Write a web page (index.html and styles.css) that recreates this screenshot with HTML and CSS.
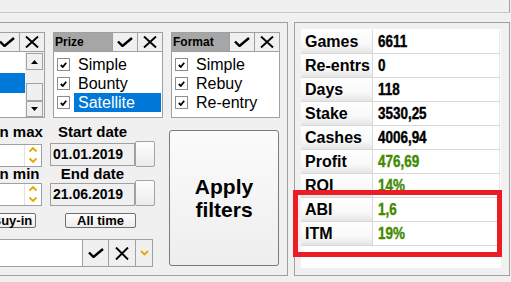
FILE: index.html
```html
<!DOCTYPE html>
<html lang="en">
<head>
<meta charset="utf-8">
<title>Tournament filters</title>
<link rel="stylesheet" href="styles.css">
</head>
<body>
<div class="top-panel"></div>
<div class="main">
  <section class="filters">
    <div class="groups">
      <div class="group g-type">
        <div class="g-head">
          <span class="g-title">Game</span>
          <span class="hbtn"><svg class="ic-check" viewBox="0 0 16 10"><polyline points="1,4.5 5.5,9 15,1"/></svg></span>
          <span class="hbtn"><svg class="ic-x" viewBox="0 0 14 12"><path d="M1 0.5 L13 11.5 M13 0.5 L1 11.5"/></svg></span>
        </div>
        <div class="list">
          <div class="list-items">
            <div class="li">NLH</div>
            <div class="li sel">PLO</div>
            <div class="li">Mix</div>
          </div>
          <div class="scrollbar">
            <div class="sb-btn sb-up"><svg viewBox="0 0 7 4"><polygon points="0,4 3.5,0 7,4"/></svg></div>
            <div class="sb-track"></div>
            <div class="sb-thumb"></div>
            <div class="sb-btn sb-down"><svg viewBox="0 0 7 4"><polygon points="0,0 7,0 3.5,4"/></svg></div>
          </div>
        </div>
      </div>

      <div class="group g-prize">
        <div class="g-head">
          <span class="g-title">Prize</span>
          <span class="hbtn"><svg class="ic-check" viewBox="0 0 16 10"><polyline points="1,4.5 5.5,9 15,1"/></svg></span>
          <span class="hbtn"><svg class="ic-x" viewBox="0 0 14 12"><path d="M1 0.5 L13 11.5 M13 0.5 L1 11.5"/></svg></span>
        </div>
        <div class="items">
          <div class="item"><span class="cb"><svg viewBox="0 0 7 6"><polyline points="0.8,3 2.8,5 6.2,0.8"/></svg></span><span class="lbl">Simple</span></div>
          <div class="item"><span class="cb"><svg viewBox="0 0 7 6"><polyline points="0.8,3 2.8,5 6.2,0.8"/></svg></span><span class="lbl">Bounty</span></div>
          <div class="item"><span class="cb"><svg viewBox="0 0 7 6"><polyline points="0.8,3 2.8,5 6.2,0.8"/></svg></span><span class="lbl sel">Satellite</span></div>
        </div>
      </div>

      <div class="group g-format">
        <div class="g-head">
          <span class="g-title">Format</span>
          <span class="hbtn"><svg class="ic-check" viewBox="0 0 16 10"><polyline points="1,4.5 5.5,9 15,1"/></svg></span>
          <span class="hbtn"><svg class="ic-x" viewBox="0 0 14 12"><path d="M1 0.5 L13 11.5 M13 0.5 L1 11.5"/></svg></span>
        </div>
        <div class="items">
          <div class="item"><span class="cb"><svg viewBox="0 0 7 6"><polyline points="0.8,3 2.8,5 6.2,0.8"/></svg></span><span class="lbl">Simple</span></div>
          <div class="item"><span class="cb"><svg viewBox="0 0 7 6"><polyline points="0.8,3 2.8,5 6.2,0.8"/></svg></span><span class="lbl">Rebuy</span></div>
          <div class="item"><span class="cb"><svg viewBox="0 0 7 6"><polyline points="0.8,3 2.8,5 6.2,0.8"/></svg></span><span class="lbl">Re-entry</span></div>
        </div>
      </div>
    </div>

    <div class="row2">
      <div class="ranges">
        <div class="lab lab-a">Buy-in max</div>
        <div class="lab lab-b">Start date</div>

        <div class="cell-a">
          <div class="spin">
            <span class="spin-val"></span>
            <span class="spin-arrows"><svg viewBox="0 0 16 21"><polyline points="4.5,6.5 8,3 11.5,6.5"/><polyline points="4.5,13.5 8,17 11.5,13.5"/></svg></span>
          </div>
        </div>
        <div class="cell-b">
          <div class="date">01.01.2019</div>
          <button class="date-btn" type="button"></button>
        </div>

        <div class="lab lab-a lab-tight">Buy-in min</div>
        <div class="lab lab-b lab-tight">End date</div>

        <div class="cell-a">
          <div class="spin">
            <span class="spin-val"></span>
            <span class="spin-arrows"><svg viewBox="0 0 16 21"><polyline points="4.5,6.5 8,3 11.5,6.5"/><polyline points="4.5,13.5 8,17 11.5,13.5"/></svg></span>
          </div>
        </div>
        <div class="cell-b cell-b2">
          <div class="date">21.06.2019</div>
          <button class="date-btn" type="button"></button>
        </div>

        <div class="btn-cell btn-cell-a"><button class="small-btn buyin" type="button">Buy-in</button></div>
        <div class="btn-cell btn-cell-b"><button class="small-btn alltime" type="button">All time</button></div>

        <div class="combo">
          <span class="combo-text"></span>
          <span class="combo-btn cbtn-check"><svg class="ic-check" viewBox="0 0 16 10"><polyline points="1,4.5 5.5,9 15,1"/></svg></span>
          <span class="combo-btn cbtn-x"><svg class="ic-x2" viewBox="0 0 14 13"><path d="M1 0.5 L13 12.5 M13 0.5 L1 12.5"/></svg></span>
          <span class="combo-btn cbtn-drop"><svg viewBox="0 0 9 6"><polyline points="1,1 4.5,4.5 8,1"/></svg></span>
        </div>
      </div>
      <button class="apply" type="button">Apply<br>filters</button>
    </div>
  </section>

  <section class="stats">
    <div class="stats-inner">
      <div class="srow"><span class="sk">Games</span><span class="sv"><span class="num">6611</span></span></div>
      <div class="srow"><span class="sk">Re-entrs</span><span class="sv"><span class="num">0</span></span></div>
      <div class="srow"><span class="sk">Days</span><span class="sv"><span class="num">118</span></span></div>
      <div class="srow"><span class="sk">Stake</span><span class="sv"><span class="num">3530,25</span></span></div>
      <div class="srow"><span class="sk">Cashes</span><span class="sv"><span class="num">4006,94</span></span></div>
      <div class="srow"><span class="sk">Profit</span><span class="sv pos"><span class="num">476,69</span></span></div>
      <div class="srow"><span class="sk">ROI</span><span class="sv pos"><span class="num">14%</span></span></div>
      <div class="srow"><span class="sk">ABI</span><span class="sv pos"><span class="num">1,6</span></span></div>
      <div class="srow"><span class="sk">ITM</span><span class="sv pos"><span class="num">19%</span></span></div>
    </div>
  </section>
</div>
<div class="highlight"></div>
</body>
</html>
```

FILE: styles.css
```css
* { box-sizing: border-box; }
html, body { margin: 0; padding: 0; }
body {
  width: 511px;
  height: 282px;
  overflow: hidden;
  background: #f0f0f0;
  font-family: "Liberation Sans", Arial, sans-serif;
  color: #000;
  position: relative;
}
svg { display: block; }

.top-panel {
  width: 510px;
  height: 13px;
  border-right: 1px solid #a0a0a0;
  border-bottom: 1px solid #c6c6c6;
}

.main {
  display: flex;
  gap: 6px;
  margin-top: 9px;
  margin-left: -150px;
}

/* ---------- filters panel ---------- */
.filters {
  width: 438px;
  height: 254px;
  border: 1px solid #a0a0a0;
  padding: 9px 7px 0 8px;
  flex-shrink: 0;
}

.groups {
  display: flex;
  gap: 8px;
  height: 86px;
}

.group {
  border: 1px solid #a0a0a0;
  background: #fff;
  display: flex;
  flex-direction: column;
}
.g-type { width: 186px; }
.g-prize { width: 110px; }
.g-format { width: 109px; }

.g-head {
  display: flex;
  height: 19px;
  background: #a6a6a6;
  border-bottom: 1px solid #a0a0a0;
  flex-shrink: 0;
}
.g-title {
  flex: 1;
  font-size: 12px;
  font-weight: bold;
  line-height: 18px;
  padding-left: 1px;
}
.hbtn {
  width: 25px;
  border-left: 1px solid #a0a0a0;
  background: #f0f0f0;
  display: flex;
  align-items: center;
  justify-content: center;
}
.ic-check { width: 16px; height: 10px; }
.ic-check polyline { fill: none; stroke: #000; stroke-width: 2.4; }
.ic-x { width: 14px; height: 12px; }
.ic-x path, .ic-x2 path { fill: none; stroke: #000; stroke-width: 1.9; }
.ic-x2 { width: 14px; height: 13px; }

/* list with scrollbar */
.list {
  flex: 1;
  display: flex;
}
.list-items {
  flex: 1;
  padding-top: 1px;
}
.li {
  height: 20px;
  line-height: 20px;
  font-size: 16px;
  padding-left: 4px;
}
.li.sel { background: #0078d7; color: #fff; }
.scrollbar {
  width: 19px;
  background: #f0f0f0;
  padding: 1px 1px 0 1px;
  display: flex;
  flex-direction: column;
}
.sb-btn, .sb-thumb {
  border: 1px solid #a3a3a3;
  background: #f0f0f0;
  display: flex;
  align-items: center;
  justify-content: center;
}
.sb-up { height: 17px; }
.sb-track { height: 13px; }
.sb-thumb { height: 18px; }
.sb-down { height: 16px; }
.sb-btn svg { width: 7px; height: 4px; }
.sb-btn polygon { fill: #000; }

/* checkbox items */
.items { padding-top: 3px; }
.item {
  height: 19px;
  display: flex;
  align-items: center;
  padding-left: 3px;
}
.cb {
  width: 13px;
  height: 13px;
  border: 1px solid #8c8c8c;
  background: #fff;
  margin-right: 4px;
  display: flex;
  align-items: center;
  justify-content: center;
  flex-shrink: 0;
}
.cb svg { width: 7px; height: 6px; }
.cb polyline { fill: none; stroke: #000; stroke-width: 1.8; }
.lbl {
  flex: 1;
  height: 19px;
  line-height: 19px;
  font-size: 16px;
  padding-left: 4px;
  margin-right: 1px;
}
.lbl.sel { background: #0078d7; color: #fff; }

/* ---------- lower filters ---------- */
.row2 {
  display: flex;
  gap: 14px;
  margin-top: 5px;
}
.ranges {
  width: 296px;
  display: grid;
  grid-template-columns: 183px 105px;
  grid-template-rows: 18px 26px 13px 26px 22px 39px;
  column-gap: 8px;
}
.lab {
  font-size: 15px;
  font-weight: bold;
  line-height: 18px;
  white-space: nowrap;
}
.lab-tight { line-height: 13px; }
.lab-a { padding-left: 103px; }
.lab-b { width: 85px; text-align: center; }

.cell-a { display: flex; justify-content: flex-end; }
.spin {
  margin-top: 3px;
  width: 110px;
  height: 23px;
  border: 1px solid #a0a0a0;
  background: #fff;
  display: flex;
}
.spin-val { flex: 1; }
.spin-arrows {
  width: 17px;
  border-left: 1px solid #e2e2e2;
}
.spin-arrows svg { width: 16px; height: 21px; }
.spin-arrows polyline { fill: none; stroke: #e6a800; stroke-width: 1.8; }

.cell-b { display: flex; align-items: flex-start; }
.date {
  width: 85px;
  height: 23px;
  margin-top: 2px;
  border: 1px solid #a0a0a0;
  background: #f0f0f0;
  font-size: 14px;
  font-weight: bold;
  line-height: 21px;
  padding-left: 2px;
}
.cell-b2 .date { margin-top: 3px; }
.date-btn {
  width: 20px;
  height: 26px;
  padding: 0;
  margin: 0;
  border: 1px solid #a3a3a3;
  border-radius: 2px;
  background: linear-gradient(#fdfdfd, #ececec);
}

.btn-cell { display: flex; align-items: flex-end; }
.btn-cell-a { justify-content: flex-end; padding-right: 6px; }
.btn-cell-b { padding-left: 15px; }
.small-btn {
  height: 15px;
  margin: 0;
  padding: 0;
  border: 1px solid #707070;
  border-radius: 2px;
  background: linear-gradient(#fefefe, #ececec);
  font-family: "Liberation Sans", Arial, sans-serif;
  font-size: 13px;
  font-weight: bold;
  line-height: 13px;
  color: #000;
}
.buyin { width: 48px; }
.alltime { width: 71px; }

.combo {
  grid-column: 1 / 3;
  align-self: end;
  width: 294px;
  height: 28px;
  border: 1px solid #a0a0a0;
  display: flex;
  background: #fff;
}
.combo-text { flex: 1; }
.combo-btn {
  border-left: 1px solid #a0a0a0;
  background: #f0f0f0;
  display: flex;
  align-items: center;
  justify-content: center;
}
.cbtn-check { width: 26px; }
.cbtn-x { width: 27px; }
.cbtn-drop { width: 17px; }
.cbtn-drop svg { width: 9px; height: 6px; }
.cbtn-drop polyline { fill: none; stroke: #e6a800; stroke-width: 1.8; }

.apply {
  width: 110px;
  height: 136px;
  margin: 7px 0 0 0;
  padding: 0;
  border: 1px solid #7a7a7a;
  border-radius: 3px;
  background: linear-gradient(#fbfbfb, #eeeeee);
  font-family: "Liberation Sans", Arial, sans-serif;
  font-size: 21px;
  font-weight: bold;
  line-height: 23px;
  color: #000;
}

/* ---------- stats panel ---------- */
.stats {
  width: 216px;
  height: 254px;
  border: 1px solid #a0a0a0;
  padding: 6px 8px 7px 6px;
  flex-shrink: 0;
}
.stats-inner {
  height: 100%;
  background: #fff;
  padding-top: 1px;
}
.srow {
  display: flex;
  height: 24px;
  border-bottom: 1px solid #d8d8d8;
  margin-right: 1px;
}
.sk {
  width: 72px;
  border-right: 1px solid #d8d8d8;
  padding-left: 4px;
  font-size: 16px;
  font-weight: bold;
  line-height: 23px;
  background: linear-gradient(#ffffff 0%, #f8f8f8 65%, #e4e4e4 100%);
}
.sv {
  flex: 1;
  padding-left: 5px;
  font-size: 16px;
  font-weight: bold;
  line-height: 23px;
  border-right: 1px solid #e4e4e4;
}
.num {
  display: inline-block;
  transform: scaleX(0.84);
  transform-origin: left center;
  -webkit-text-stroke: 0.4px currentColor;
}
.sv.pos { color: #3f8a00; }

.highlight {
  position: absolute;
  left: 293px;
  top: 190px;
  width: 209px;
  height: 67px;
  border: 5px solid #ec1c24;
}
```
